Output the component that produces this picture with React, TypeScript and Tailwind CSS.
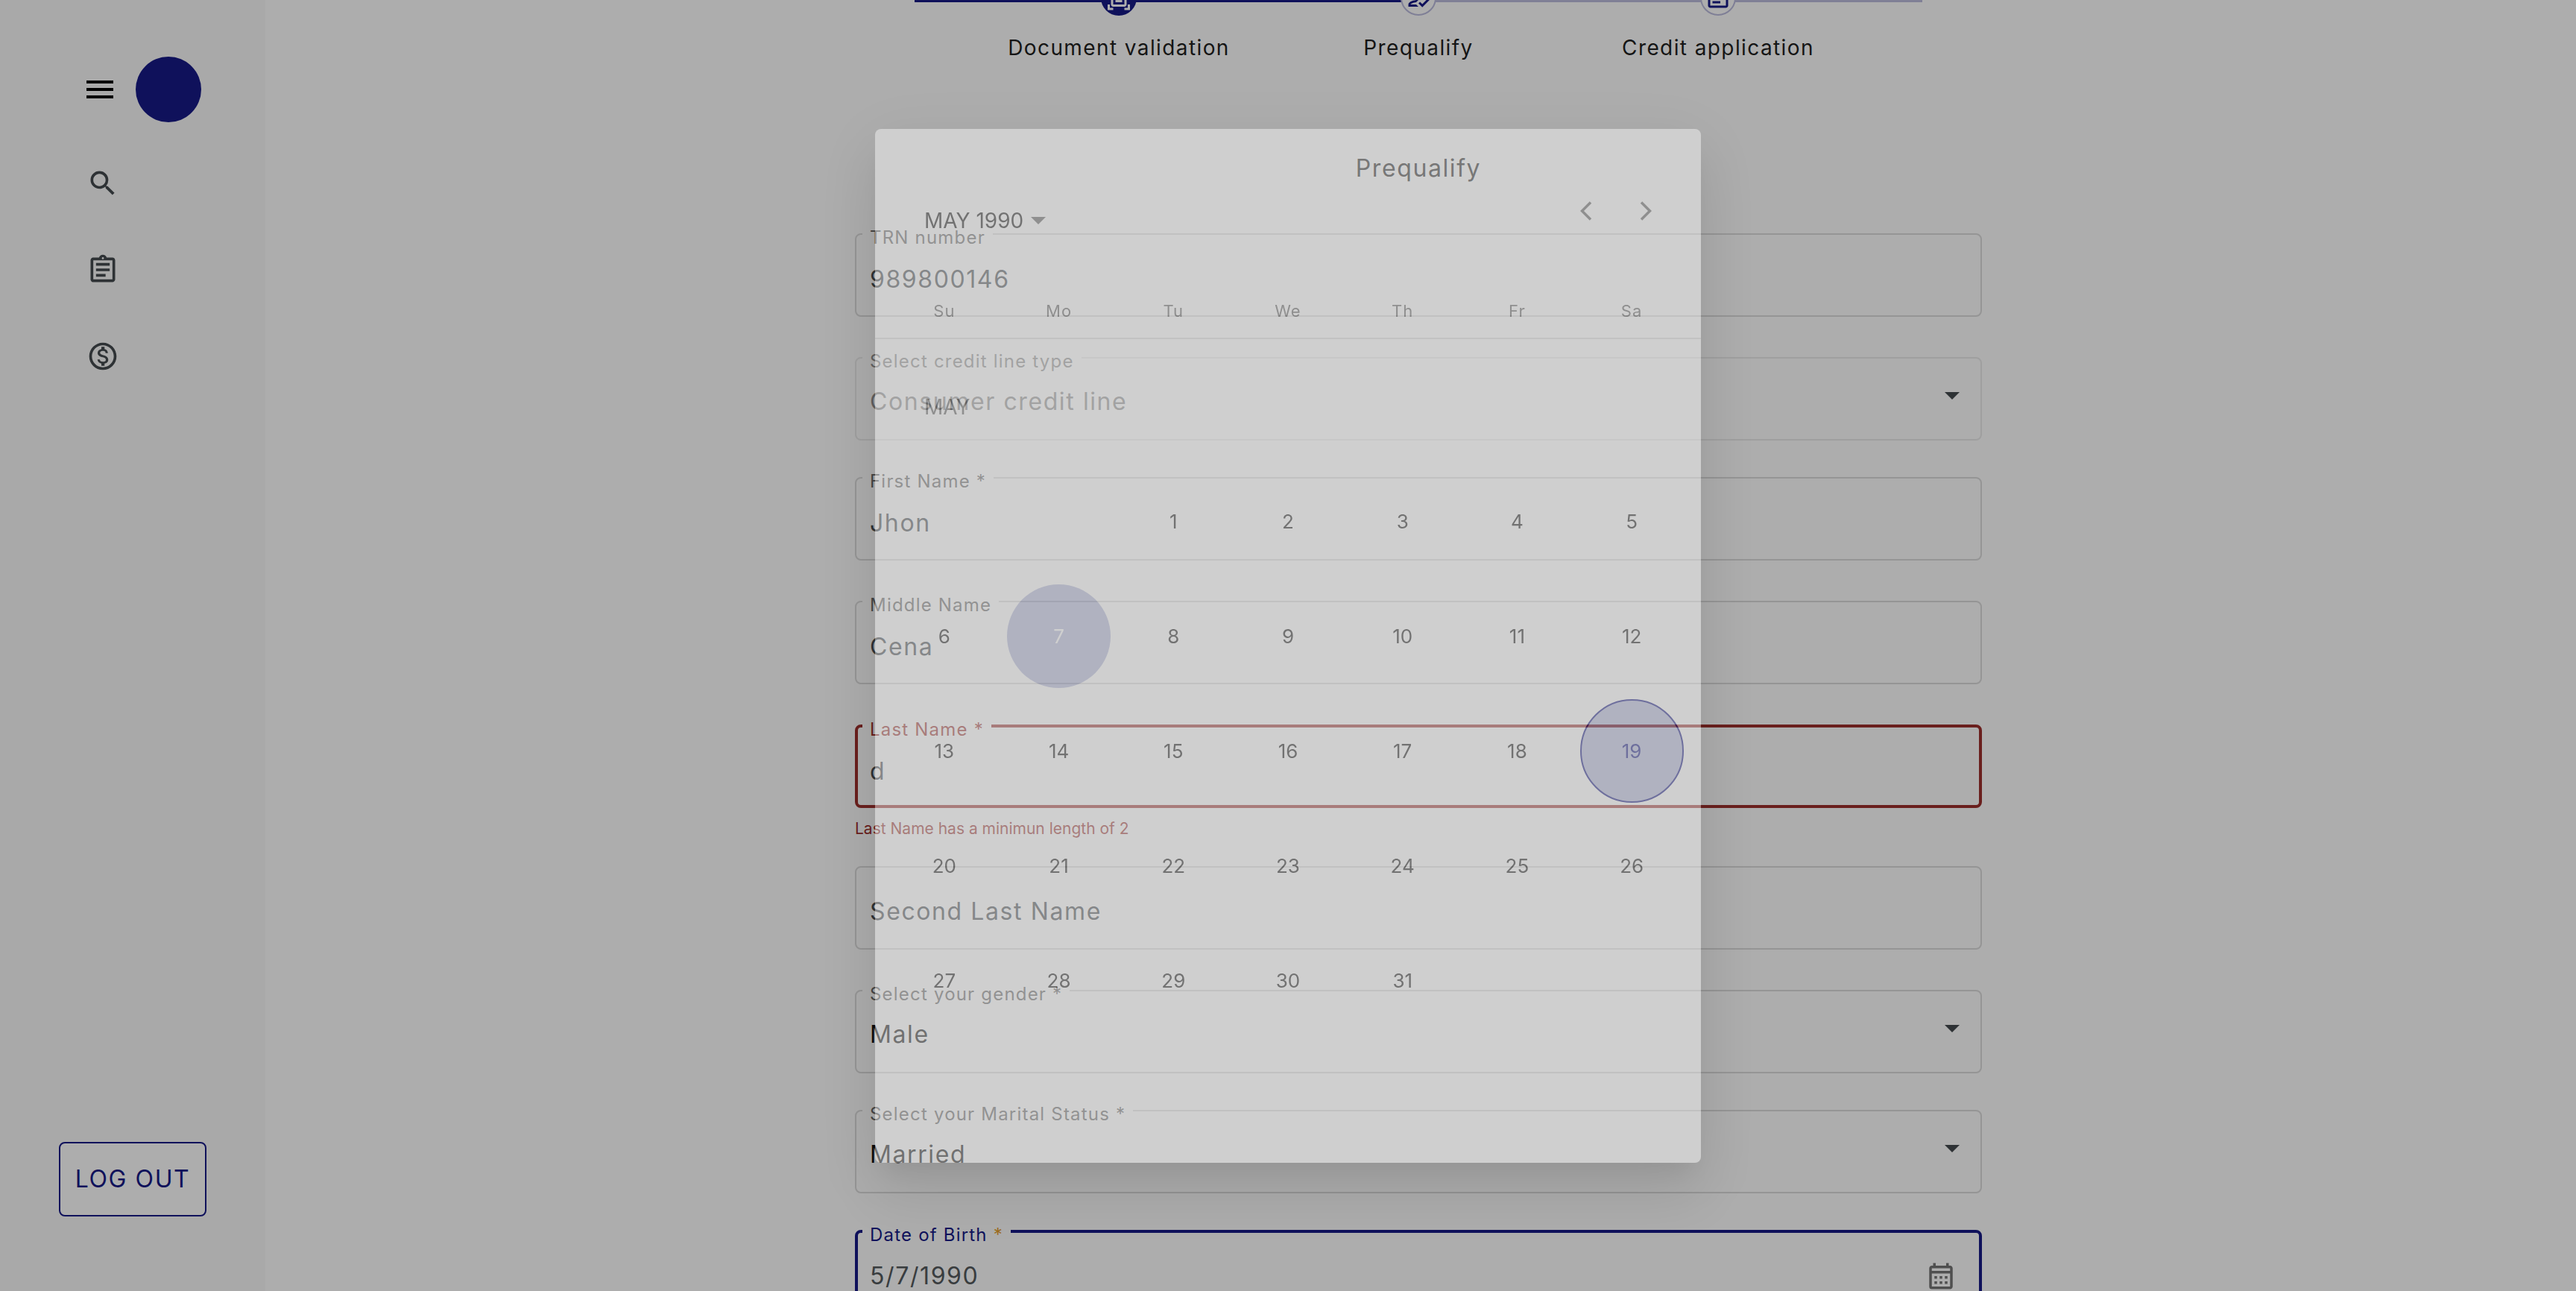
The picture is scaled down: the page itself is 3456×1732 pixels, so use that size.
import type { ReactNode } from 'react';
import {
  MdMenu,
  MdSearch,
  MdOutlineArticle,
  MdOutlineAssignment,
  MdOutlineDocumentScanner,
  MdOutlineHowToReg,
  MdOutlineMonetizationOn,
  MdOutlineCalendarMonth,
} from 'react-icons/md';

type Tone = 'normal' | 'disabled' | 'error' | 'active';

const frame: Record<Tone, string> = {
  normal: 'border-2 border-[#dcdcdc] text-[#666666]',
  disabled: 'border-2 border-[#ebebeb] text-[#8e8e8e]',
  error: 'border-4 border-[#9c2f2c] text-[#9c2f2c]',
  active: 'border-4 border-[#171a87] text-[#171a87]',
};

const legendInset: Record<Tone, string> = {
  normal: 'ml-2',
  disabled: 'ml-2',
  error: 'ml-1.5',
  active: 'ml-1.5',
};

function Frame({
  id,
  label,
  required,
  tone = 'normal',
  starClass = '',
  children,
}: {
  id: string;
  label?: string;
  required?: boolean;
  tone?: Tone;
  starClass?: string;
  children: ReactNode;
}) {
  return (
    <fieldset className={`relative h-28 w-full rounded-lg ${frame[tone]}`}>
      {label && (
        <legend className={`h-0.5 px-2.5 text-2xl/3 tracking-wider ${legendInset[tone]}`}>
          <label htmlFor={id}>
            {label}
            {required && <span className={starClass}> *</span>}
          </label>
        </legend>
      )}
      {children}
    </fieldset>
  );
}

function TextField({
  id,
  label,
  value,
  required,
  tone = 'normal',
}: {
  id: string;
  label: string;
  value: string;
  required?: boolean;
  tone?: Tone;
}) {
  return (
    <Frame id={id} label={label} required={required} tone={tone}>
      <input
        id={id}
        defaultValue={value}
        className={`h-[104px] w-full bg-transparent text-[32px] tracking-wider text-[#444b50] outline-none ${
          tone === 'error' ? 'px-4 pt-3' : 'px-[18px] pt-3.5'
        }`}
      />
    </Frame>
  );
}

function SelectField({
  id,
  label,
  value,
  required,
  disabled,
}: {
  id: string;
  label: string;
  value: string;
  required?: boolean;
  disabled?: boolean;
}) {
  return (
    <Frame id={id} label={label} required={required} tone={disabled ? 'disabled' : 'normal'}>
      <select
        id={id}
        disabled={disabled}
        defaultValue={value}
        className="h-[104px] w-full appearance-none bg-transparent px-[18px] pt-3 text-[32px] tracking-wider text-[#111111] opacity-100 outline-none disabled:text-[#8e8e8e]"
      >
        <option>{value}</option>
      </select>
      <svg viewBox="0 0 20 10" className="pointer-events-none absolute top-[45px] right-7 h-2.5 w-5 fill-[#444a4e]" aria-hidden="true">
        <path d="M0 0h20L10 10z" />
      </svg>
    </Frame>
  );
}

const steps = [
  { label: 'Document validation', Icon: MdOutlineDocumentScanner, done: true },
  { label: 'Prequalify', Icon: MdOutlineHowToReg, done: false },
  { label: 'Credit application', Icon: MdOutlineArticle, done: false },
];

function Stepper() {
  return (
    <div className="relative -mt-[27px] px-[73px]">
      <div className="absolute inset-x-0 top-[18px] flex h-3">
        <div className="flex-1 bg-[#171a87]" />
        <div className="flex-1 bg-[#bcbcde]" />
      </div>
      <ol className="relative grid grid-cols-3">
        {steps.map(({ label, Icon, done }) => (
          <li key={label} className="flex flex-col items-center gap-[23px]">
            <span
              className={`flex size-12 items-center justify-center rounded-full ${
                done ? 'bg-[#171a87] text-white' : 'border-2 border-[#bcbcde] bg-white text-[#171a87]'
              }`}
            >
              <Icon className="size-9" />
            </span>
            <span className="text-[28px]/10 tracking-wider text-[#1f1f1f]">{label}</span>
          </li>
        ))}
      </ol>
    </div>
  );
}

const navItems = [
  { label: 'Search', Icon: MdSearch },
  { label: 'Applications', Icon: MdOutlineAssignment },
  { label: 'Credits', Icon: MdOutlineMonetizationOn },
];

function Sidebar() {
  return (
    <aside className="flex w-[356px] shrink-0 flex-col bg-[#fafafa] pt-[76px] pb-[100px]">
      <div className="flex items-center gap-6 pl-[110px]">
        <button type="button" aria-label="Menu">
          <MdMenu className="size-12 text-black" />
        </button>
        <span className="size-[88px] rounded-full bg-[#171a87]" />
      </div>
      <nav className="mt-[60px] flex flex-col gap-[72px] pl-[116px]">
        {navItems.map(({ label, Icon }) => (
          <a key={label} href="#" aria-label={label} className="w-11">
            <Icon className="size-11 text-[#444a4e]" />
          </a>
        ))}
      </nav>
      <button
        type="button"
        className="mt-auto ml-[79px] h-[100px] w-[198px] rounded-lg border-2 border-[#171a87] bg-white text-[32px] tracking-wider text-[#171a87]"
      >
        LOG OUT
      </button>
    </aside>
  );
}

const weekdays = ['Su', 'Mo', 'Tu', 'We', 'Th', 'Fr', 'Sa'];
const days = Array.from({ length: 31 }, (_, i) => i + 1);

function dayClass(day: number) {
  if (day === 7) return 'bg-[#b4b9db] text-white';
  if (day === 19) return 'border-2 border-[#171a87] bg-[#b4b9db] text-[#171a87]';
  return 'text-[#212121]';
}

function CalendarDialog() {
  return (
    <div className="fixed inset-0 flex items-center justify-center bg-black/32">
      <div
        role="dialog"
        aria-label="Choose date"
        className="w-[1108px] rounded-lg bg-white pt-[70px] pb-[167px] opacity-[0.415] shadow-[0_22px_30px_-14px_rgba(0,0,0,0.2),0_48px_76px_6px_rgba(0,0,0,0.14),0_18px_92px_16px_rgba(0,0,0,0.12)]"
      >
        <div className="flex h-20 items-center pr-[34px] pl-[66px]">
          <button type="button" className="mt-[26px] flex items-center gap-2.5 text-[28px] text-[#212121]">
            MAY 1990
            <svg viewBox="0 0 20 10" className="h-2.5 w-5 fill-[#666666]" aria-hidden="true">
              <path d="M0 0h20L10 10z" />
            </svg>
          </button>
          <button type="button" aria-label="Previous month" className="ml-auto flex size-20 items-center justify-center">
            <svg viewBox="0 0 16 26" className="h-[26px] w-4" fill="none" stroke="#666666" strokeWidth="3.500" aria-hidden="true">
              <path d="M14 1.500L2.500 13 14 24.500" />
            </svg>
          </button>
          <button type="button" aria-label="Next month" className="flex size-20 items-center justify-center">
            <svg viewBox="0 0 16 26" className="h-[26px] w-4" fill="none" stroke="#666666" strokeWidth="3.500" aria-hidden="true">
              <path d="M2 1.500L13.500 13 2 24.500" />
            </svg>
          </button>
        </div>
        <div className="mt-[60px] grid grid-cols-7 border-b-2 border-[#e0e0e0] px-4">
          {weekdays.map((d) => (
            <span key={d} className="flex h-[70px] items-center justify-center text-[22px] tracking-wider text-[#666666]">
              {d}
            </span>
          ))}
        </div>
        <div className="mt-3.5 grid grid-cols-7 px-4 text-[26px]">
          <span className="col-span-7 flex h-[154px] items-center pl-[50px] text-[28px] text-[#666666]">MAY</span>
          {days.map((day) => (
            <span key={day} className={`flex h-[154px] items-center justify-center ${day === 1 ? 'col-start-3' : ''}`}>
              <button type="button" className={`size-[139px] rounded-full ${dayClass(day)}`}>
                {day}
              </button>
            </span>
          ))}
        </div>
      </div>
    </div>
  );
}

export default function App() {
  return (
    <div className="flex h-screen overflow-hidden bg-white font-['Inter',sans-serif]">
      <Sidebar />
      <main className="flex-1 overflow-hidden pr-1.5">
        <div className="mx-auto w-[1352px]">
          <Stepper />
        </div>
        <form className="mx-auto w-[1512px]">
          <h1 className="mt-[122px] text-center text-[32px]/10 tracking-wider text-[#222222]">Prequalify</h1>
          <div className="mt-[67px] flex flex-col gap-[54px]">
            <TextField id="trn" label="TRN number" value="989800146" />
            <div className="flex flex-col gap-[49px]">
              <SelectField id="line" label="Select credit line type" value="Consumer credit line" disabled />
              <TextField id="first" label="First Name" value="Jhon" required />
            </div>
            <TextField id="middle" label="Middle Name" value="Cena" />
            <div className="flex flex-col">
              <TextField id="last" label="Last Name" value="d" required tone="error" />
              <p className="mt-4 text-[21px]/6 text-[#9c2f2c]">Last Name has a minimun length of 2</p>
              <div className="mt-[38px]">
                <Frame id="second">
                  <input
                    id="second"
                    aria-label="Second Last Name"
                    placeholder="Second Last Name"
                    className="h-[104px] w-full bg-transparent px-[18px] pt-3 text-[32px] tracking-wider outline-none placeholder:text-[#444b50]"
                  />
                </Frame>
              </div>
            </div>
            <div className="flex flex-col gap-[49px]">
              <SelectField id="gender" label="Select your gender" value="Male" required />
              <SelectField id="marital" label="Select your Marital Status" value="Married" required />
              <Frame id="dob" label="Date of Birth" required tone="active" starClass="text-[#e8a02c]">
                <div className="flex h-[104px] items-center pt-3 pr-[30px] pl-4">
                  <input
                    id="dob"
                    defaultValue="5/7/1990"
                    className="w-full bg-transparent text-[32px] tracking-wider text-[#555a5e] outline-none"
                  />
                  <button type="button" aria-label="Open calendar">
                    <MdOutlineCalendarMonth className="size-[42px] text-[#757575]" />
                  </button>
                </div>
              </Frame>
            </div>
          </div>
        </form>
      </main>
      <CalendarDialog />
    </div>
  );
}
